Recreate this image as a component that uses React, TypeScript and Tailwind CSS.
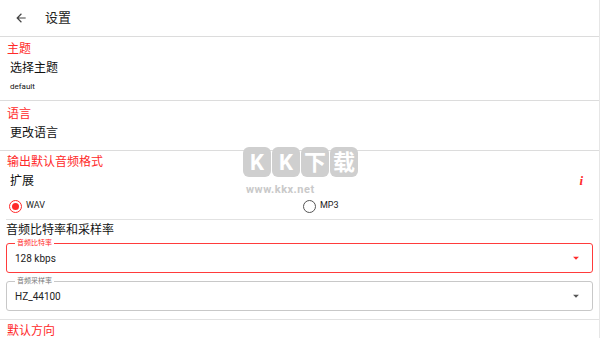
import React from 'react';

const RED = '#ff2a2a';
const FONT = { fontFamily: 'Roboto, "Noto Sans CJK SC", sans-serif' };

function Radio({ checked, label }: { checked: boolean; label: string }) {
  return (
    <div className="flex items-center gap-[4px]">
      <div
        className={`w-[13px] h-[13px] rounded-full border-[1.5px] flex items-center justify-center ${
          checked ? 'border-[#ff2a2a]' : 'border-[#555]'
        }`}
      >
        {checked && <div className="w-[7px] h-[7px] rounded-full bg-[#ff2a2a]" />}
      </div>
      <span className="text-[9px] text-[#222]">{label}</span>
    </div>
  );
}

function OutlinedSelect({ label, value, active }: { label: string; value: string; active?: boolean }) {
  return (
    <div
      className={`relative h-[30px] mx-[6px] rounded-[3px] flex items-center justify-between pl-[8px] pr-[9px] ${
        active ? 'border-[1.5px] border-[#ff3b3b]' : 'border-[1.5px] border-[#c8c8c8]'
      }`}
    >
      <span
        className={`absolute -top-[4px] left-[8px] bg-white px-[2px] text-[7px] leading-[7px] ${
          active ? 'text-[#ff2a2a]' : 'text-[#777]'
        }`}
      >
        {label}
      </span>
      <span className="text-[10px] text-[#222]">{value}</span>
      <svg width="14" height="14" viewBox="0 0 24 24">
        <path d="M7 10l5 5 5-5z" fill={active ? RED : '#555'} />
      </svg>
    </div>
  );
}

function SectionTitle({ children }: { children: React.ReactNode }) {
  return (
    <div className="h-[22px] flex items-center px-[7px] text-[12px]" style={{ color: RED }}>
      {children}
    </div>
  );
}

export default function App() {
  return (
    <div className="relative w-[600px] h-[338px] bg-white overflow-hidden border-r border-[#e6e6e6]" style={FONT}>
      {/* Header */}
      <div className="h-[37px] flex items-center border-b border-[#dcdcdc]">
        <svg width="14" height="14" viewBox="0 0 24 24" className="ml-[14px]">
          <path d="M20 11H7.83l5.59-5.59L12 4l-8 8 8 8 1.41-1.41L7.83 13H20v-2z" fill="#444" />
        </svg>
        <span className="ml-[17px] text-[13px] text-[#222]">设置</span>
      </div>

      {/* Theme */}
      <div className="h-[63px] border-b border-[#dcdcdc]">
        <div className="mt-[1px]">
          <SectionTitle>主题</SectionTitle>
        </div>
        <div className="h-[15px] flex items-center px-[10px] text-[12px] text-[#111]">选择主题</div>
        <div className="h-[14px] mt-[5px] flex items-center px-[10px] text-[8px] text-[#111]">default</div>
      </div>

      {/* Language */}
      <div className="h-[48px] border-b border-[#dcdcdc]">
        <div className="mt-[2px]">
          <SectionTitle>语言</SectionTitle>
        </div>
        <div className="h-[14px] mt-[1px] flex items-center px-[10px] text-[12px] text-[#111]">更改语言</div>
      </div>

      {/* Audio format */}
      <div>
        <SectionTitle>输出默认音频格式</SectionTitle>
        <div className="h-[16px] flex items-center justify-between px-[10px] text-[12px] text-[#111]">
          <span>扩展</span>
          <span className="italic font-bold text-[13px] mr-[6px]" style={{ color: RED, fontFamily: '"Liberation Serif", serif' }}>
            i
          </span>
        </div>
        <div className="h-[18px] mt-[8px] flex items-center pl-[9px]">
          <div className="w-[294px]">
            <Radio checked label="WAV" />
          </div>
          <Radio checked={false} label="MP3" />
        </div>
        <div className="mx-[6px] mt-[4px] border-t border-[#e2e2e2]" />
        <div className="h-[14px] mt-[3px] flex items-center px-[6px] text-[12px] leading-[14px] text-[#111]">音频比特率和采样率</div>
        <div className="mt-[6px]">
          <OutlinedSelect label="音频比特率" value="128 kbps" active />
        </div>
        <div className="mt-[8px]">
          <OutlinedSelect label="音频采样率" value="HZ_44100" />
        </div>
        <div className="mt-[8px] border-t border-[#e2e2e2]" />
        <SectionTitle>默认方向</SectionTitle>
      </div>

      {/* Watermark */}
      <div className="absolute left-[243px] top-[147px] flex flex-col items-start pointer-events-none">
        <div className="flex gap-[1px]">
          {['K', 'K', '下', '载'].map((c, i) => (
            <div
              key={i}
              className="w-[28px] h-[30px] rounded-[6px] bg-[#cfcfcf] flex items-center justify-center text-white text-[22px] font-bold"
            >
              {c}
            </div>
          ))}
        </div>
        <div className="mt-[8px] ml-[3px] text-[11px] font-bold tracking-[0.5px] text-[#c9c9c9] leading-[10px]">www.kkx.net</div>
      </div>
    </div>
  );
}
